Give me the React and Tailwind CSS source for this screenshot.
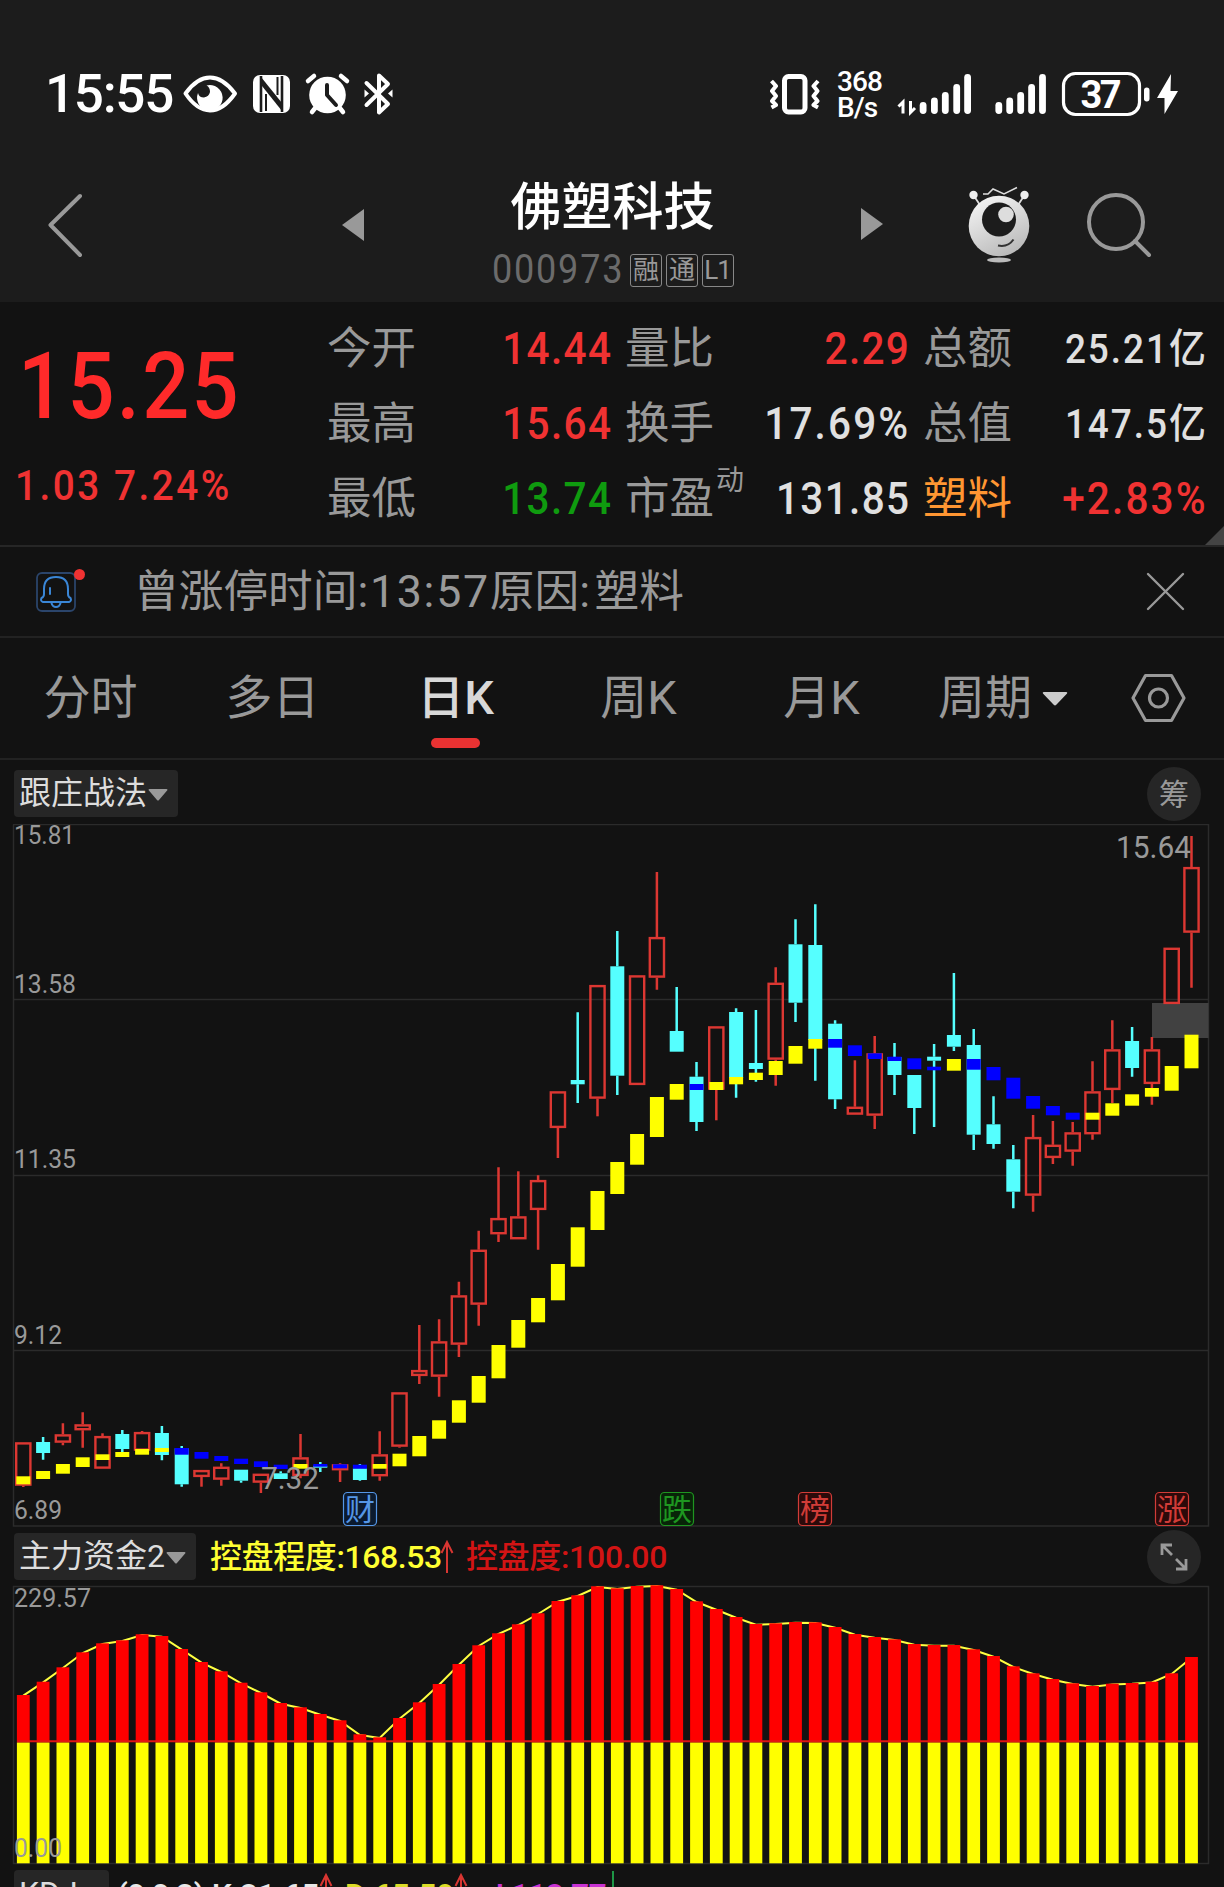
import React from 'react'

const QUOTES = [
  [
    { label: '今开', value: '14.44', color: 'text-[#f03232]' },
    { label: '最高', value: '15.64', color: 'text-[#f03232]' },
    { label: '最低', value: '13.74', color: 'text-[#0f9b0f]' },
  ],
  [
    { label: '量比', value: '2.29', color: 'text-[#f03232]' },
    { label: '换手', value: '17.69%', color: 'text-[#e0e0e0]' },
    { label: '市盈', sup: '动', value: '131.85', color: 'text-[#e0e0e0]' },
  ],
  [
    { label: '总额', value: '25.21亿', color: 'text-[#e0e0e0]', small: true },
    { label: '总值', value: '147.5亿', color: 'text-[#e0e0e0]', small: true },
    { label: '塑料', value: '+2.83%', color: 'text-[#f03232]', hot: true },
  ],
]

const TABS = ['分时', '多日', '日K', '周K', '月K']

// u = up, d = down: [kind, high, top, bottom, low, maTop, maBottom, ma colour]
const CANDLES = [
  ['u', 1442.3, 1442.3, 1485.7, 1487, 1476.3, 1484.3, 'y'],
  ['d', 1437, 1442, 1453, 1459.7, 1471, 1479, 'y'],
  ['u', 1423.3, 1434.3, 1442.7, 1445.3, 1464, 1473.7, 'y'],
  ['u', 1412.3, 1424.3, 1430.3, 1447.7, 1457.3, 1467, 'y'],
  ['u', 1433.3, 1436, 1468.7, 1468.7, 1454.3, 1460, 'y'],
  ['d', 1430, 1434, 1449, 1452, 1452, 1457, 'y'],
  ['u', 1431, 1432, 1450.7, 1450.7, 1449, 1454.7, 'y'],
  ['d', 1426, 1433, 1455, 1460.3, 1448, 1452, 'y'],
  ['d', 1446, 1448.3, 1484.3, 1486.7, 1448, 1454.7, 'b'],
  ['u', 1470, 1470, 1477, 1486.7, 1452, 1458.7, 'b'],
  ['u', 1463.3, 1466.7, 1479.7, 1485.7, 1456, 1461, 'b'],
  ['d', 1469.7, 1469.7, 1480.7, 1482.7, 1458.7, 1464, 'b'],
  ['u', 1473.7, 1473.7, 1482.7, 1493, 1461.3, 1467, 'b'],
  ['d', 1471.3, 1473.3, 1479, 1479, 1464.7, 1469, 'b'],
  ['u', 1434, 1457.3, 1476, 1478.3, 1464, 1468.7, 'y'],
  ['d', 1462, 1465.7, 1467.7, 1472, 1464, 1466.7, 'b'],
  ['u', 1463.3, 1464.3, 1470.3, 1482, 1464.3, 1468.3, 'b'],
  ['d', 1464, 1468.3, 1480, 1480.7, 1464.7, 1468.7, 'b'],
  ['u', 1431.3, 1454.3, 1476.3, 1480.7, 1464, 1468.7, 'y'],
  ['u', 1392.3, 1392.3, 1446.7, 1447.7, 1453.7, 1466.3, 'y'],
  ['u', 1325, 1370, 1376, 1384, 1436, 1456.3, 'y'],
  ['u', 1319.3, 1341.3, 1376.7, 1396.7, 1420.3, 1438.7, 'y'],
  ['u', 1281.7, 1295.3, 1344.7, 1357, 1400.3, 1422.7, 'y'],
  ['u', 1230.7, 1249.7, 1304.7, 1325.7, 1376, 1402.7, 'y'],
  ['u', 1167.3, 1218, 1234.3, 1242, 1345, 1378.3, 'y'],
  ['u', 1171.3, 1216.3, 1239.3, 1239.3, 1320, 1347.7, 'y'],
  ['u', 1175.3, 1180, 1210, 1249.7, 1298, 1322.3, 'y'],
  ['u', 1091.3, 1091.3, 1128, 1158, 1264, 1300.3, 'y'],
  ['d', 1012.3, 1080, 1084.3, 1103, 1227.3, 1266.7, 'y'],
  ['u', 985, 985, 1098.7, 1116.3, 1191, 1230, 'y'],
  ['d', 931, 966.3, 1075.7, 1095, 1162, 1194, 'y'],
  ['u', 975.3, 975.3, 1085, 1085, 1134, 1164.7, 'y'],
  ['u', 872, 937, 977.7, 989.7, 1097, 1137, 'y'],
  ['d', 987, 1031, 1051.7, 1051.7, 1084, 1099.7, 'y'],
  ['d', 1062, 1076.7, 1122, 1131, 1084, 1090, 'b'],
  ['u', 1026.3, 1026.3, 1089.7, 1120.3, 1082, 1090, 'y'],
  ['d', 1008.3, 1012, 1078, 1097.7, 1077, 1084.3, 'y'],
  ['d', 1010, 1063, 1069, 1081.7, 1072.7, 1080, 'y'],
  ['u', 967.3, 982.7, 1059.7, 1085.7, 1061, 1075, 'y'],
  ['d', 919.3, 944.3, 1002.7, 1022, 1046, 1063.7, 'y'],
  ['d', 904.3, 945, 1040, 1080.7, 1039, 1048.7, 'y'],
  ['d', 1020.3, 1023.7, 1099.3, 1109, 1039, 1047.7, 'b'],
  ['u', 1060.3, 1106.7, 1114.7, 1114.7, 1045.3, 1056, 'b'],
  ['u', 1036, 1053.3, 1115.7, 1129, 1053.3, 1059, 'b'],
  ['d', 1043, 1057, 1075, 1095, 1056.7, 1061, 'b'],
  ['d', 1075, 1075, 1108, 1134, 1058.3, 1069.3, 'b'],
  ['d', 1044, 1056.7, 1060.7, 1127, 1066.7, 1070.3, 'b'],
  ['d', 973, 1035, 1046.7, 1051, 1059, 1070.7, 'y'],
  ['d', 1029, 1045, 1134.7, 1150, 1059, 1069.7, 'b'],
  ['d', 1096.3, 1124.3, 1144, 1148.7, 1067, 1080.3, 'b'],
  ['d', 1145, 1159.3, 1191.7, 1208.3, 1077.7, 1098.7, 'b'],
  ['u', 1115, 1137, 1195.7, 1211.7, 1096, 1108.7, 'b'],
  ['u', 1121, 1144.7, 1158, 1164, 1106, 1115.3, 'b'],
  ['u', 1122, 1132.3, 1151.7, 1165.7, 1112.7, 1119.7, 'b'],
  ['u', 1061.3, 1091.3, 1134.3, 1139.7, 1112.7, 1119.7, 'y'],
  ['u', 1020.3, 1049.3, 1090, 1103, 1103.3, 1115.7, 'y'],
  ['d', 1027, 1041, 1068, 1076.7, 1094.3, 1105.7, 'y'],
  ['u', 1037, 1049.3, 1084, 1104.7, 1088, 1096.7, 'y'],
  ['u', 947.7, 947.7, 1004, 1004, 1066, 1090.7, 'y'],
  ['u', 836, 867, 932.7, 987.7, 1034.7, 1068.3, 'y'],
]

const BAR_TOPS = [
  1695, 1681.7, 1667.3, 1652.3, 1643.3, 1640.3, 1634.3, 1636, 1649, 1662,
  1671.3, 1682.7, 1692.3, 1703, 1707.3, 1714, 1720.3, 1734.3, 1737.3, 1718,
  1702.3, 1684, 1664, 1645.3, 1633.3, 1624.3, 1613.3, 1601, 1595.3, 1586.3,
  1588.3, 1586, 1585.3, 1589, 1601.3, 1609, 1617, 1624, 1623.3, 1622,
  1622.3, 1627, 1634, 1637, 1639.3, 1644, 1645, 1645, 1649.3, 1656,
  1666.3, 1673.3, 1679, 1683.3, 1686, 1683.7, 1683, 1681.7, 1673.3, 1657,
]

const MARKS = [
  { x: 343.5, text: '财', color: '#5596e6', bg: '#0b1a2e' },
  { x: 660.5, text: '跌', color: '#1e9620', bg: '#082408' },
  { x: 798.5, text: '榜', color: '#d23c38', bg: '#2c0a0a' },
  { x: 1155.5, text: '涨', color: '#d23c38', bg: '#2c0a0a' },
]

const MA_COLORS = { y: '#ffff00', b: '#0000ff' }
const columnX = i => 23.3 + i * 19.8

const Caret = ({ width, height, color }) => (
  <svg width={width} height={height} viewBox="0 0 20 12" preserveAspectRatio="none">
    <path d="M1.5 0h17q1.5 0 .6 1.6L11 11q-1 1.2-2 0L.9 1.6Q0 0 1.5 0Z" fill={color} />
  </svg>
)

const StatusBar = () => (
  <div className="h-[150px] flex items-center justify-between pt-[37px] pl-[45px] pr-[44px] text-white">
    <div className="flex items-center">
      <span className="w-[135px] pt-[2px] text-[53px] leading-none font-medium tracking-[-1.3px] whitespace-nowrap">15:55</span>
      <svg width="224" height="46" viewBox="180 70 224 46">
        <path d="M185.500 92.500Q197 76.500 210 76.500T235 92.500Q223 109.500 210 109.500T185.500 92.500Z" fill="none" stroke="#fff" strokeWidth="4" strokeLinejoin="round" />
        <path d="M206.500 84.500A12.800 12.800 0 1 1 198 92Q199 96.500 204 96.500Q209 95.500 210 91Q210 86 206.500 84.500Z" fill="#fff" />
        <rect x="253" y="74" width="37" height="38" rx="7" fill="#fff" />
        <path d="M261 75v36M282 75v36" stroke="#1c1c1c" strokeWidth="2.600" fill="none" />
        <path d="M261 76l21 26v8L262 85Z" fill="#1c1c1c" />
        <path d="M266 91v19l14 1ZM277 75v17L266 78Z" fill="#fff" />
        <path d="M266 93v17M277.500 76v18" stroke="#1c1c1c" strokeWidth="2" />
        <circle cx="327.500" cy="94" r="18.300" fill="#fff" />
        <path d="M308 80l6-5M347 80l-6-5" stroke="#fff" strokeWidth="4.500" strokeLinecap="round" />
        <path d="M312 111l4-5M343 111l-4-5" stroke="#fff" strokeWidth="4.500" strokeLinecap="round" />
        <path d="M327 84v10l9 10" stroke="#1c1c1c" strokeWidth="4" strokeLinecap="round" strokeLinejoin="round" fill="none" />
        <path d="M366.500 82l21.500 21-9 8.500V74.500l9 8.500-21.500 21" fill="none" stroke="#fff" strokeWidth="4" strokeLinecap="round" strokeLinejoin="round" />
        <path d="M364.500 88.500v8l4.500-4ZM392.500 88.500v8l-4.500-4Z" fill="#fff" />
      </svg>
    </div>
    <div className="flex items-center">
      <svg width="50" height="44" viewBox="770 71 50 44">
        <rect x="784.500" y="75.500" width="20.500" height="35.500" rx="4" fill="none" stroke="#fff" strokeWidth="5" />
        <path d="M771.500 80l4.500 5-4 5 4 5-4 5 4 4-4.500 2.500M818 80l-4.500 5 4 5-4 5 4 5-4 4 4.500 2.500" fill="none" stroke="#fff" strokeWidth="4" strokeLinejoin="round" />
      </svg>
      <div className="w-[76px] pl-[17px] pt-[2px] text-[28px] leading-[26px] font-medium tracking-[-0.9px]">
        <div>368</div>
        <div>B/s</div>
      </div>
      <svg width="284" height="46" viewBox="896 70 284 46">
        <path d="M898.500 105.500l4.500-4.500v11.500M910.500 100v11.500l4.500-4.500" fill="none" stroke="#fff" strokeWidth="3" />
        {[[923.1, 101], [934.4, 96.5], [945.3, 91], [956.7, 83], [967.6, 73]].map(([x, y]) => (
          <rect key={x} x={x - 3.4} y={y} width="6.800" height={113 - y} rx="3.400" fill="#fff" />
        ))}
        {[[998.8, 101], [1009.7, 96.5], [1020.7, 91], [1031.6, 83], [1042.5, 73]].map(([x, y]) => (
          <rect key={x} x={x - 3.4} y={y} width="6.800" height={113 - y} rx="3.400" fill="#fff" />
        ))}
        <rect x="1063.500" y="72.500" width="76" height="41" rx="12" fill="none" stroke="#fff" strokeWidth="3.200" />
        <text x="1101" y="107" fontSize="38" fontWeight="700" textLength="41" textAnchor="middle" fill="#fff">37</text>
        <rect x="1144" y="86.500" width="5.500" height="14" rx="2.700" fill="#fff" />
        <path d="M1171 73L1157 97h7.500v16L1178 90h-7.500Z" fill="#fff" />
      </svg>
    </div>
  </div>
)

const TitleBar = () => (
  <div className="h-[152px] flex items-start">
    <svg className="mt-[36px] ml-[43px]" width="44" height="78" viewBox="44 186 44 78">
      <path d="M81 196L51.500 225 81 255" fill="none" stroke="#999" strokeWidth="4" strokeLinecap="round" strokeLinejoin="round" />
    </svg>
    <svg className="mt-[59px] ml-[255px]" width="22" height="32" viewBox="0 0 22 32">
      <path d="M22 0v32L0 16Z" fill="#999" />
    </svg>
    <div className="w-[497px] flex flex-col items-center pt-[31px]">
      <h1 className="text-[51px] leading-[54px] h-[54px] font-medium text-white">佛塑科技</h1>
      <div className="flex items-center gap-1 mt-[16px] text-[#999]">
        <span className="w-[134px] pt-[2px] whitespace-nowrap">
          <span className="inline-block origin-left scale-x-90 text-[40px] leading-[34px] text-[#6b6b6b] tracking-[2px]">000973</span>
        </span>
        {['融', '通', 'L1'].map(tag => (
          <span key={tag} className="w-8 h-[33px] rounded-[3px] border border-[#888] text-[26px] leading-[31px] text-center tracking-[-1px]">{tag}</span>
        ))}
      </div>
    </div>
    <svg className="mt-[58px]" width="22" height="32" viewBox="0 0 22 32">
      <path d="M0 0v32l22-16Z" fill="#999" />
    </svg>
    <svg className="mt-[34px] ml-[83px]" width="66" height="82" viewBox="966 184 66 82">
      <defs>
        <linearGradient id="robot" x1="0.2" y1="0" x2="0.7" y2="1">
          <stop offset="0" stopColor="#f5f5f5" />
          <stop offset="1" stopColor="#b8b8b8" />
        </linearGradient>
      </defs>
      <path d="M983 194h5l5-5 11 5 13-6.500" fill="none" stroke="#ddd" strokeWidth="1.500" />
      <path d="M974 196l6 9M1024 196l-6 9" stroke="#ddd" strokeWidth="1.800" />
      <circle cx="973.500" cy="195" r="4.200" fill="#eee" />
      <circle cx="1024.500" cy="195" r="4.200" fill="#eee" />
      <circle cx="999" cy="226" r="30.300" fill="url(#robot)" />
      <circle cx="999" cy="219.500" r="17" fill="#1c1c1c" />
      <circle cx="1006" cy="214.500" r="7.800" fill="#ddd" />
      <path d="M998 245.500q10 2 15.500-6" fill="none" stroke="#333" strokeWidth="2" />
      <ellipse cx="999" cy="260" rx="12" ry="2.600" fill="#bbb" />
    </svg>
    <svg className="mt-[36px] ml-[52px]" width="72" height="78" viewBox="1084 186 72 78">
      <circle cx="1116" cy="222" r="27" fill="none" stroke="#999" strokeWidth="4" />
      <path d="M1135 241l14 14" stroke="#999" strokeWidth="4" strokeLinecap="round" />
    </svg>
  </div>
)

const QuotePanel = () => (
  <section className="relative h-[245px] flex border-b-2 border-[#262626]">
    <div className="w-[327px] pt-[37px] pl-[15px] font-medium whitespace-nowrap">
      <div className="pl-[3px] text-[92px] leading-[96px] text-[#ff2a2a]">
        <span className="inline-block origin-left scale-x-90 tracking-[2.6px]">15.25</span>
      </div>
      <div className="mt-[25px] text-[43px] leading-[50px] text-[#f03232]">
        <span className="inline-block origin-left scale-x-90 tracking-[2.8px]">1.03 7.24%</span>
      </div>
    </div>
    <div className="grid grid-cols-[283px_283px_283px] gap-x-[15px] pt-[9px]">
      {QUOTES.map((column, i) => (
        <dl key={i}>
          {column.map(({ label, sup, value, color, small, hot }) => (
            <div key={label} className="h-[75px] flex items-center justify-between whitespace-nowrap">
              <dt className={`flex text-[44.500px] leading-[50px] ${hot ? 'text-[#ff9632]' : 'text-[#999]'}`}>
                {label}
                {sup && <span className="-mt-[18px] ml-[2px] w-0 text-[28px]">{sup}</span>}
              </dt>
              <dd className={`origin-right scale-x-90 font-medium leading-[50px] -mr-[2px] ${small ? 'text-[41px] tracking-[2.2px]' : value.endsWith('%') ? 'text-[45px] tracking-[2.4px]' : 'text-[45px] tracking-[1.5px]'} ${color}`}>
                {value}
              </dd>
            </div>
          ))}
        </dl>
      ))}
    </div>
    <svg className="absolute right-0 bottom-0" width="19" height="19">
      <path d="M19 0v19H0Z" fill="#444" />
    </svg>
  </section>
)

const NoticeBar = () => (
  <div className="h-[91px] flex items-center border-b-2 border-[#222] pl-[35px] pr-[39px]">
    <svg width="52" height="48" viewBox="35 568 52 48">
      <rect x="37" y="573" width="38" height="38" rx="5" fill="none" stroke="#2b456b" strokeWidth="1.800" />
      <path d="M43 602q-3-1-1.500-4 2.500-1 2.500-4v-5q0-12 12-12t12 12v5q0 3 2.500 4 1.500 3-1.500 4ZM51.500 603q1 4 4.500 4t4.500-4M50 588v6" fill="none" stroke="#3a86d6" strokeWidth="2" strokeLinecap="round" />
      <circle cx="79.500" cy="574.500" r="5.500" fill="#f03232" />
    </svg>
    <p className="flex-1 pl-[47px] text-[44.700px] leading-[50px] text-[#999] whitespace-nowrap">
      曾涨停时间<span className="tracking-[1.7px]">:13:57</span>原因<span className="tracking-[4.5px]">:</span>塑料
    </p>
    <svg width="39" height="39" viewBox="0 0 39 39">
      <path d="M2 2l35 35M37 2L2 37" stroke="#999" strokeWidth="2.400" strokeLinecap="round" />
    </svg>
  </div>
)

const PeriodTabs = () => (
  <nav className="h-[122px] flex border-b-2 border-[#222] text-[47px] leading-[50px] text-[#999] whitespace-nowrap">
    <div className="grid grid-cols-[181px_183px_183px_183px_183px]">
      {TABS.map(tab => (
        <div key={tab} className="flex flex-col items-center pt-[35px]">
          <span className={tab === '日K' ? 'font-medium text-[#d8d8d8]' : ''}>{tab}</span>
          {tab === '日K' && <span className="mt-[15px] w-[49px] h-[10px] rounded-full bg-[#e83232]" />}
        </div>
      ))}
    </div>
    <div className="flex items-start pt-[35px] pl-[25px]">
      周期
      <span className="mt-[19px] ml-[10px] flex">
        <Caret width={26} height={14} color="#ccc" />
      </span>
    </div>
    <svg className="mt-[34px] ml-[62px]" width="56" height="52" viewBox="1130 672 56 52">
      <path d="M1145.500 675.500h26L1184 698l-12.500 22.500h-26L1133 698Z" fill="none" stroke="#999" strokeWidth="3.200" strokeLinejoin="round" />
      <circle cx="1158.500" cy="698" r="9" fill="none" stroke="#999" strokeWidth="3.200" />
    </svg>
  </nav>
)

const IndicatorButton = ({ children }) => (
  <button className="h-[47px] flex items-center rounded bg-[#262626] pl-[5px] pr-[10px] text-[32px] leading-[45px] text-[#ddd] whitespace-nowrap">
    {children}
    <span className="ml-px mt-[3px] flex">
      <Caret width={20} height={12} color="#999" />
    </span>
  </button>
)

const AxisLabel = ({ x = 14, y, width, height = 26, children }) => (
  <text x={x} y={y} fontSize={height} textLength={width} lengthAdjust="spacingAndGlyphs" fill="#999">
    {children}
  </text>
)

const CandleChart = () => (
  <svg className="block" width="1224" height="704" viewBox="0 824 1224 704">
    <path d="M13 824.500H1208.500V1526H13.500V824.500M13 999.500H1208M13 1175.500H1208M13 1350.500H1208" fill="none" stroke="#2b2b2b" strokeWidth="1.500" />
    <AxisLabel y={844} width={61}>15.81</AxisLabel>
    <AxisLabel y={993} width={62}>13.58</AxisLabel>
    <AxisLabel y={1168} width={62}>11.35</AxisLabel>
    <AxisLabel y={1344} width={48}>9.12</AxisLabel>
    <AxisLabel y={1519} width={48}>6.89</AxisLabel>
    <rect x="1152" y="1003" width="56.500" height="35" fill="#414141" />
    {CANDLES.map(([kind, high, top, bottom, low, maTop, maBottom, ma], i) => {
      const x = columnX(i)
      const up = kind === 'u'
      const color = up ? '#dc3732' : '#55ffff'
      return (
        <g key={i}>
          <path d={`M${x} ${high}V${top}M${x} ${bottom}V${low}`} stroke={color} strokeWidth="2.500" />
          {up ? (
            <rect x={x - 7.1} y={top + 1.1} width="14.200" height={bottom - top - 2.2} fill="none" stroke={color} strokeWidth="2.400" />
          ) : (
            <rect x={x - 7} y={top} width="14" height={bottom - top} fill={color} />
          )}
          <rect x={x - 7} y={maTop} width="14" height={maBottom - maTop} fill={MA_COLORS[ma]} />
        </g>
      )
    })}
    <AxisLabel x={261} y={1489} width={58} height={32}>7.32</AxisLabel>
    <AxisLabel x={1116} y={858} width={75} height={32}>15.64</AxisLabel>
    {MARKS.map(({ x, text, color, bg }) => (
      <g key={text}>
        <rect x={x} y="1492.500" width="33" height="33" rx="4" fill={bg} stroke={color} strokeWidth="1.200" />
        <text x={x + 16.5} y="1520" fontSize="30" textAnchor="middle" fill={color}>{text}</text>
      </g>
    ))}
  </svg>
)

const FundChart = () => (
  <svg className="block" width="1224" height="282" viewBox="0 1584 1224 282">
    <path d="M13.500 1586.500H1208.500V1863.500H13.500Z" fill="none" stroke="#2b2b2b" strokeWidth="1.500" />
    <AxisLabel y={1607} width={77}>229.57</AxisLabel>
    <polyline points={BAR_TOPS.map((top, i) => `${columnX(i)},${top + 0.7}`).join(' ')} fill="none" stroke="#ffff40" strokeWidth="2" />
    {BAR_TOPS.map((top, i) => (
      <g key={i}>
        <rect x={columnX(i) - 6.4} y={top} width="12.800" height={1742.5 - top} fill="#ff0000" />
        <rect x={columnX(i) - 6.4} y="1742.500" width="12.800" height="120.800" fill="#ffff00" />
      </g>
    ))}
    <path d="M17 1741.300H1198" stroke="#e01414" strokeWidth="2" />
    <AxisLabel y={1857} width={48}>0.00</AxisLabel>
  </svg>
)

const TrendArrow = ({ down }) => (
  <svg className={down ? 'rotate-180' : ''} width="14" height="34" viewBox="0 0 14 34">
    <path d="M7 33V2M1.500 13L7 2l5.500 11" fill="none" stroke={down ? '#1e9646' : '#d93632'} strokeWidth="2" />
  </svg>
)

const App = () => (
  <main className="w-[1224px] h-[1887px] overflow-hidden bg-[#121212] font-['Roboto','Noto_Sans_CJK_SC',sans-serif]">
    <header className="h-[302px] bg-[#1c1c1c]">
      <StatusBar />
      <TitleBar />
    </header>
    <QuotePanel />
    <NoticeBar />
    <PeriodTabs />

    <div className="h-[64px] flex items-center justify-between pt-[3px] pl-[14px] pr-[23px]">
      <IndicatorButton>跟庄战法</IndicatorButton>
      <span className="w-[54px] h-[54px] rounded-full bg-[#262626] text-[30px] leading-[56px] text-center text-[#999]">筹</span>
    </div>
    <CandleChart />

    <div className="h-[56px] flex items-center pt-px pl-[14px] pr-[23px] text-[32px] leading-[44px] whitespace-nowrap">
      <IndicatorButton>主力资金2</IndicatorButton>
      <span className="ml-[14px] font-medium tracking-[-0.4px] text-[#ffff32]">控盘程度:168.53</span>
      <span className="-ml-[2px] flex"><TrendArrow /></span>
      <span className="ml-[12px] font-medium tracking-[-0.3px] text-[#d21414]">控盘度:100.00</span>
      <span className="ml-auto w-[54px] h-[54px] rounded-full bg-[#262626] flex items-center justify-center">
        <svg width="28" height="28" viewBox="0 0 28 28">
          <path d="M12 2H2v10M2 2l10 10M26 16v10H16M26 26L16 16" fill="none" stroke="#999" strokeWidth="2.800" />
        </svg>
      </span>
    </div>
    <FundChart />

    <div className="h-[60px] flex items-start pt-[4px] pl-[14px] text-[32px] leading-[50px] whitespace-nowrap">
      <IndicatorButton>KDJ</IndicatorButton>
      <span className="ml-[8px] tracking-[-0.5px] font-medium text-[#e8e8e8]">(9,9,3) K:81.65</span>
      <span className="flex pt-[3px]"><TrendArrow /></span>
      <span className="ml-[12px] tracking-[-0.2px] font-medium text-[#dcdc28]">D:65.59</span>
      <span className="flex pt-[3px]"><TrendArrow /></span>
      <span className="ml-[18px] font-medium tracking-[-0.8px] text-[#c832d2]">J:118.77</span>
      <TrendArrow down />
    </div>
  </main>
)

export default App
